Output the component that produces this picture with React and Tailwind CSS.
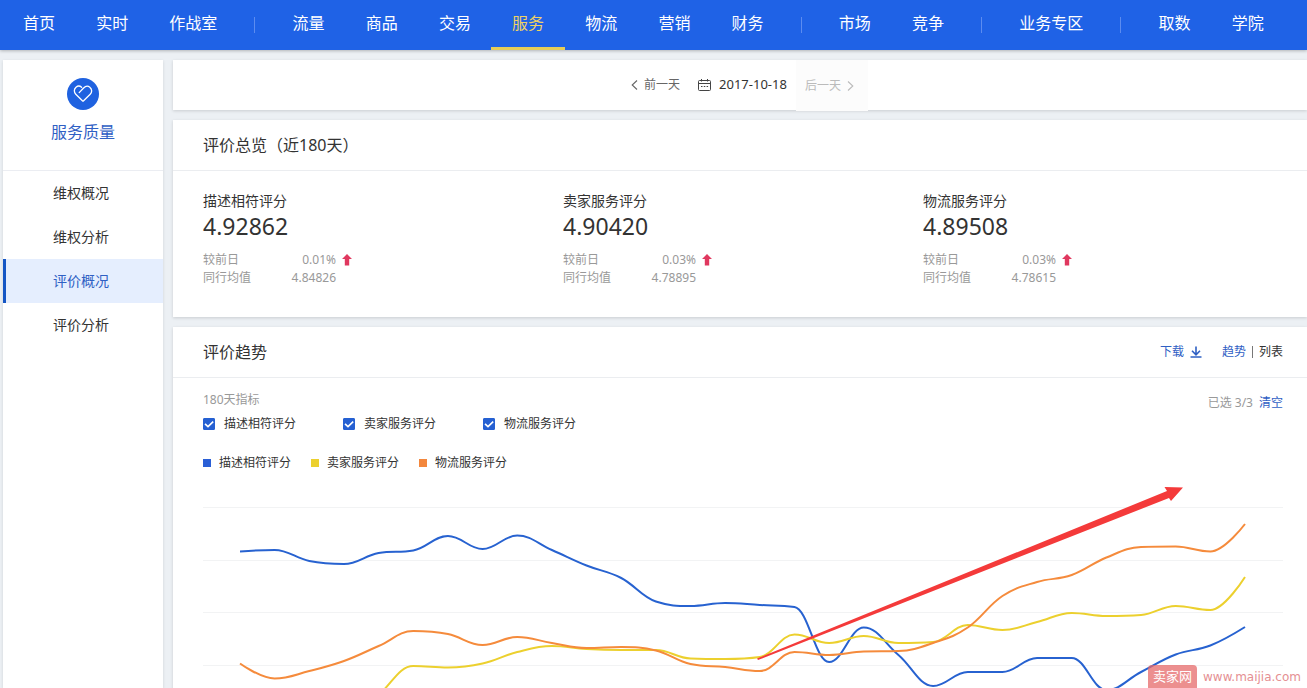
import { useState } from 'react';

const NAV = [
  ['首页', '实时', '作战室'],
  ['流量', '商品', '交易', '服务', '物流', '营销', '财务'],
  ['市场', '竞争'],
  ['业务专区'],
  ['取数', '学院'],
];

const MENU = ['维权概况', '维权分析', '评价概况', '评价分析'];

const SCORES = [
  { title: '描述相符评分', score: '4.92862', change: '0.01%', average: '4.84826' },
  { title: '卖家服务评分', score: '4.90420', change: '0.03%', average: '4.78895' },
  { title: '物流服务评分', score: '4.89508', change: '0.03%', average: '4.78615' },
];

// y positions inside the 1080 x 260 plot, one per day
const SERIES = [
  {
    name: '描述相符评分',
    color: '#2762d0',
    swatch: 'bg-[#2a5fd6]',
    points: [71.5, 70, 81, 84, 73, 70.5, 56, 69, 55.5, 70, 85.5, 98, 121.5, 126, 123, 125, 127, 182, 147.5, 175, 206, 192, 192, 178, 178, 210, 192, 174.5, 165.5, 147],
  },
  {
    name: '卖家服务评分',
    color: '#ecd02e',
    swatch: 'bg-[#ecd02e]',
    points: [300, 290, 272, 246, 215, 186, 187.5, 183.5, 172, 166, 169, 170, 170, 178.5, 179, 177, 154.5, 163, 156, 163, 162, 145, 150, 142, 133, 136, 135, 126, 130, 97],
  },
  {
    name: '物流服务评分',
    color: '#f58b3c',
    swatch: 'bg-[#f3873d]',
    points: [183.5, 198.5, 191, 181, 166, 151, 154, 165, 157, 163, 168, 167, 170.5, 184, 187, 191, 172, 175, 171.5, 171, 163, 147.5, 116, 102, 95, 77.5, 67, 66.5, 71.5, 44],
  },
];

const PLOT_LEFT = 37;
const PLOT_STEP = 1005 / 29;

function splinePath(values) {
  const pts = values.map((y, i) => ({ x: PLOT_LEFT + i * PLOT_STEP, y }));
  const ctrl = pts.map((p, i) => {
    const prev = pts[i - 1];
    const next = pts[i + 1];
    if (!prev || !next) return { lx: p.x, ly: p.y, rx: p.x, ry: p.y };
    const lx = (1.5 * p.x + prev.x) / 2.5;
    const rx = (1.5 * p.x + next.x) / 2.5;
    let ly = (1.5 * p.y + prev.y) / 2.5;
    let ry = (1.5 * p.y + next.y) / 2.5;
    const fix = ((ry - ly) * (rx - p.x)) / (rx - lx) + p.y - ry;
    ly += fix;
    ry += fix;
    // keep the curve from overshooting its neighbours
    if (ly > prev.y && ly > p.y) {
      ly = Math.max(prev.y, p.y);
      ry = 2 * p.y - ly;
    } else if (ly < prev.y && ly < p.y) {
      ly = Math.min(prev.y, p.y);
      ry = 2 * p.y - ly;
    }
    if (ry > next.y && ry > p.y) {
      ry = Math.max(next.y, p.y);
      ly = 2 * p.y - ry;
    } else if (ry < next.y && ry < p.y) {
      ry = Math.min(next.y, p.y);
      ly = 2 * p.y - ry;
    }
    return { lx, ly, rx, ry };
  });
  return pts.reduce((d, p, i) => {
    if (i === 0) return `M${p.x} ${p.y}`;
    const a = ctrl[i - 1];
    const b = ctrl[i];
    return `${d} C${a.rx} ${a.ry} ${b.lx} ${b.ly} ${p.x} ${p.y}`;
  }, '');
}

function TopNav() {
  return (
    <nav className="relative z-10 flex h-[50px] shrink-0 justify-between bg-[#1f62e6] pl-[3px] pr-[23px] text-base text-white shadow-[0_1px_3px_rgba(0,0,0,0.25)]">
      {NAV.flatMap((group, g) => [
        g > 0 && <span key={`sep-${g}`} className="mx-4 mt-[17px] h-4 w-px shrink-0 bg-[#5c8cf0]" />,
        ...group.map((label) => {
          const active = label === '服务';
          return (
            <a
              key={label}
              href="#"
              className={`relative shrink-0 whitespace-nowrap px-5 leading-[46px] ${active ? 'text-[#f0d264]' : ''}`}
            >
              {label}
              {active && <span className="absolute -inset-x-px bottom-0 h-[3px] bg-[#e6cd58]" />}
            </a>
          );
        }),
      ])}
    </nav>
  );
}

function Sidebar() {
  return (
    <aside className="w-40 shrink-0 bg-white shadow-[0_1px_3px_rgba(0,0,0,0.12)]">
      <div className="flex h-[111px] flex-col items-center border-b border-[#ebedf2] pt-[18px]">
        <div className="flex h-8 w-8 items-center justify-center rounded-full bg-[#1f62e0]">
          <svg width="20" height="18" viewBox="0 0 20 18" fill="none" stroke="#fff" strokeWidth="1.3" strokeLinecap="round" strokeLinejoin="round">
            <path d="M6.2 7.6 L10.6 3 C12.4 1.1 14.8 .6 16.8 2.2 C19.2 4.2 19.2 7.2 17.2 9.2 L10.6 15.8 Q10 16.4 9.4 15.8 L2.8 9.2 C.8 7.2 .8 4.2 3 2.2 C4.8 .7 7 .8 8.6 2.2" />
          </svg>
        </div>
        <h2 className="mt-[10px] text-base leading-6 text-[#2f60c4]">服务质量</h2>
      </div>
      <ul>
        {MENU.map((label) => (
          <li key={label}>
            <a
              href="#"
              className={`block border-l-[3px] pl-[47px] text-sm leading-[44px] ${
                label === '评价概况'
                  ? 'border-[#1556c4] bg-[#e5eefe] text-[#2f60c4]'
                  : 'border-transparent text-[#333]'
              }`}
            >
              {label}
            </a>
          </li>
        ))}
      </ul>
    </aside>
  );
}

function DateBar() {
  return (
    <div className="flex h-[50px] items-stretch justify-center bg-white pl-[10px] text-xs text-[#666] shadow-[0_1px_3px_rgba(0,0,0,0.15)]">
      <button type="button" className="flex items-center gap-[6px] px-[9px]">
        <svg width="7" height="12" viewBox="0 0 7 12" fill="none" stroke="#666" strokeWidth="1.1">
          <path d="M6 1.5 L1.2 6 L6 10.5" />
        </svg>
        前一天
      </button>
      <button type="button" className="flex items-center gap-2 px-[9px] text-[13px] text-[#333]">
        <svg width="13" height="12" viewBox="0 0 13 12" fill="none" stroke="#444">
          <rect x=".5" y="1.5" width="12" height="10" rx="1" />
          <path d="M.5 4.5 H12.5 M3.5 0 V2.5 M9.5 0 V2.5" />
          <path d="M3 7.5 H10.5" strokeDasharray="1.5 1.3" />
        </svg>
        2017-10-18
      </button>
      <button type="button" disabled className="flex h-[51px] items-center gap-[6px] bg-[#fcfcfc] pl-[9px] pr-[14px] text-[#bbb]">
        后一天
        <svg width="7" height="12" viewBox="0 0 7 12" fill="none" stroke="#bbb" strokeWidth="1.1">
          <path d="M1 1.5 L5.8 6 L1 10.5" />
        </svg>
      </button>
    </div>
  );
}

function Overview() {
  return (
    <section className="bg-white shadow-[0_1px_3px_rgba(0,0,0,0.15)]">
      <h3 className="border-b border-[#ebedf0] pl-[30px] text-base leading-[50px] text-[#333]">评价总览（近180天）</h3>
      <div className="grid grid-cols-3 pb-[30px] pl-[30px] pr-6 pt-5">
        {SCORES.map((item) => (
          <div key={item.title}>
            <p className="text-sm leading-5 text-[#333]">{item.title}</p>
            <p className="text-[23px] leading-[30px] text-[#333]">{item.score}</p>
            <dl className="mt-[10px] text-xs leading-[18px] text-[#999]">
              <div className="flex items-center">
                <div className="flex w-[133px] justify-between">
                  <dt>较前日</dt>
                  <dd>{item.change}</dd>
                </div>
                <svg className="ml-[6px]" width="10" height="12" viewBox="0 0 10 12" fill="#e0385f">
                  <path d="M5 0 L10 5 H7.2 V11.5 H2.8 V5 H0 Z" />
                </svg>
              </div>
              <div className="flex w-[133px] justify-between">
                <dt>同行均值</dt>
                <dd>{item.average}</dd>
              </div>
            </dl>
          </div>
        ))}
      </div>
    </section>
  );
}

function TrendChart({ shown }) {
  return (
    <svg className="mt-[7px] block h-auto w-full" viewBox="0 0 1080 260" fill="none">
      {[27.5, 80.5, 132.5, 185.5].map((y) => (
        <path key={y} d={`M0 ${y} H1080`} stroke="#f2f3f4" />
      ))}
      {SERIES.filter((s) => shown.includes(s.name)).map((s) => (
        <path key={s.name} d={splinePath(s.points)} stroke={s.color} strokeWidth="2" strokeLinejoin="round" />
      ))}
      <path d="M554 178.5 L964 11 L961.5 7 L980 7.5 L968 21 L966 18 L555 180 Z" fill="#f43a3a" />
    </svg>
  );
}

function Trend() {
  const [shown, setShown] = useState(SERIES.map((s) => s.name));

  const toggle = (name) => {
    setShown((prev) => (prev.includes(name) ? prev.filter((n) => n !== name) : [...prev, name]));
  };

  return (
    <section className="bg-white text-xs text-[#333] shadow-[0_1px_3px_rgba(0,0,0,0.15)]">
      <div className="flex h-[51px] items-center border-b border-[#ebedf0] pl-[30px] pr-6">
        <h3 className="text-base">评价趋势</h3>
        <a href="#" className="ml-auto flex items-center gap-[6px] text-[#2f60c4]">
          下载
          <svg width="12" height="12" viewBox="0 0 12 12" fill="none" stroke="#2f60c4" strokeWidth="1.6">
            <path d="M6 .5 V8.5 M2 4.8 L6 8.8 L10 4.8 M.5 11 H11.5" />
          </svg>
        </a>
        <div className="ml-5 flex items-center gap-[6px]">
          <a href="#" className="text-[#2f60c4]">趋势</a>
          <span className="h-3 w-px bg-[#777]" />
          <a href="#">列表</a>
        </div>
      </div>

      <div className="pl-[30px] pr-6 pt-3">
        <div className="flex justify-between">
          <div>
            <p className="leading-5 text-[#999]">180天指标</p>
            <div className="mt-[3px] flex h-[22px] items-center">
              {SERIES.map((s) => (
                <label key={s.name} className="flex w-[140px] items-center gap-[9px]">
                  <span className="relative flex h-3 w-3">
                    <input
                      type="checkbox"
                      checked={shown.includes(s.name)}
                      onChange={() => toggle(s.name)}
                      className="h-3 w-3 appearance-none rounded-[1px] border border-[#2560d2] checked:bg-[#2560d2]"
                    />
                    <svg className="pointer-events-none absolute inset-0" width="12" height="12" viewBox="0 0 12 12" fill="none" stroke="#fff" strokeWidth="1.6">
                      <path d="M2 5.8 L5 8.6 L10.2 3.6" />
                    </svg>
                  </span>
                  {s.name}
                </label>
              ))}
            </div>
          </div>
          <p className="flex gap-[6px] self-start pt-[3px] leading-5 text-[#999]">
            已选 {shown.length}/3
            <button type="button" onClick={() => setShown([])} className="text-[#2f60c4]">清空</button>
          </p>
        </div>

        <ul className="mt-[18px] flex gap-5">
          {SERIES.map((s) => (
            <li key={s.name} className="flex items-center gap-2 leading-5">
              <span className={`h-2 w-2 ${s.swatch}`} />
              {s.name}
            </li>
          ))}
        </ul>
        <TrendChart shown={shown} />
      </div>
    </section>
  );
}

export default function App() {
  return (
    <div className="relative flex h-screen flex-col overflow-hidden bg-[#ecf0f4] font-['Noto_Sans','Noto_Sans_CJK_SC',sans-serif]">
      <TopNav />
      <div className="flex min-h-0 flex-1 gap-[10px] pl-[3px] pt-[10px]">
        <Sidebar />
        <main className="flex min-w-0 flex-1 flex-col gap-[10px]">
          <DateBar />
          <Overview />
          <Trend />
        </main>
      </div>

      {/* site watermark */}
      <div className="absolute bottom-0 right-[6px] flex items-center gap-[6px]">
        <span className="rounded-t-sm bg-[#e6696a]/75 px-[5px] text-[13px] leading-[23px] text-white">卖家网</span>
        <span className="font-['DejaVu_Sans',sans-serif] text-xs text-[#e58f92]">www.maijia.com</span>
      </div>
    </div>
  );
}
